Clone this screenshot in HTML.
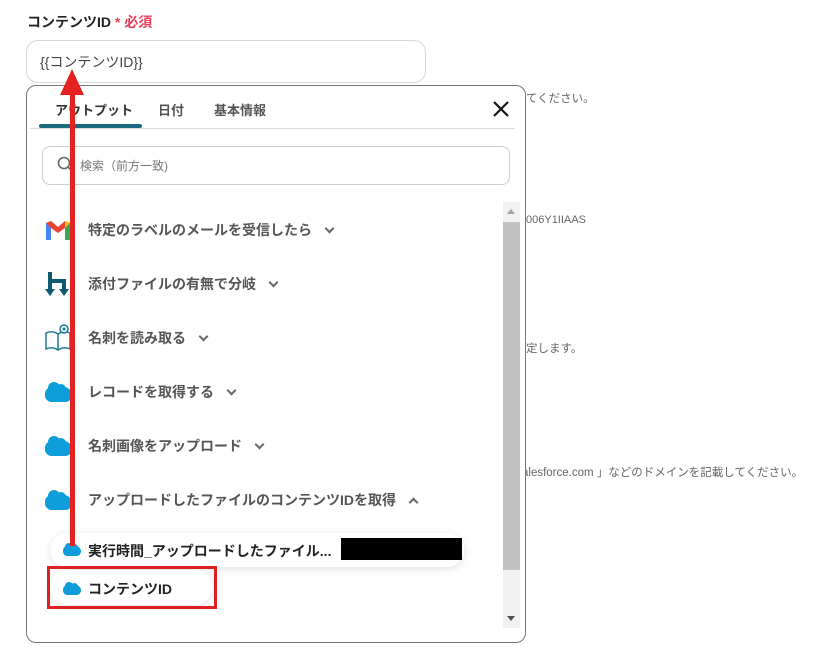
<!DOCTYPE html>
<html><head><meta charset="utf-8"><style>
*{box-sizing:border-box;margin:0;padding:0}
body{width:826px;height:660px;background:#fff;position:relative;overflow:hidden;font-family:"Liberation Sans","Noto Sans CJK JP",sans-serif;color:#333}
.a{position:absolute;white-space:nowrap}
.bg{font-size:11.5px;color:#666}
.item{position:absolute;left:44px;font-size:14px;font-weight:bold;color:#555;display:flex;align-items:center}
.item .ic{width:28px;height:28px;margin-right:16px;display:flex;align-items:center;justify-content:center}
.chev{display:inline-block;width:7px;height:7px;border-right:2px solid #666;border-bottom:2px solid #666;transform:rotate(45deg);margin-left:14px;margin-top:-4px}
.chev.up{transform:rotate(-135deg);margin-top:4px}
.cloud{display:inline-block;width:27px;height:15px;background:#0d9dda;border-radius:8px 10px 8px 8px;position:relative;margin-top:4px}
.cloud:before{content:"";position:absolute;left:3px;top:-5px;width:12px;height:12px;background:#0d9dda;border-radius:50%}
.cloud:after{content:"";position:absolute;left:11px;top:-3px;width:10px;height:10px;background:#0d9dda;border-radius:50%}
.cloud.s{width:18px;height:10px;margin-top:2px}
.cloud.s:before{width:8px;height:8px;top:-3px;left:2px}
.cloud.s:after{width:7px;height:7px;top:-2px;left:8px}
</style></head><body>
<div class="a" style="left:27px;top:12px;font-size:14px;font-weight:bold;color:#222">コンテンツID <span style="color:#e8405a">* 必須</span></div>
<div class="a" style="left:26px;top:40px;width:400px;height:43px;border:1px solid #d5d7dc;border-radius:12px"></div>
<div class="a" style="left:40px;top:52px;font-size:14px;color:#444">{{コンテンツID}}</div>
<div class="a bg" style="left:526px;top:90px">てください。</div>
<div class="a bg" style="left:526px;top:214px;font-size:11px">006Y1IIAAS</div>
<div class="a bg" style="left:526px;top:340px">定します。</div>
<div class="a bg" style="left:522px;top:464px">alesforce.com 」などのドメインを記載してください。</div>

<div class="a" style="left:26px;top:85px;width:500px;height:558px;border:1px solid #777;border-radius:10px;background:#fff"></div>
<div class="a" style="left:55px;top:100px;font-size:13px;font-weight:bold;color:#333">アウトプット</div>
<div class="a" style="left:158px;top:100px;font-size:13px;font-weight:bold;color:#555">日付</div>
<div class="a" style="left:214px;top:100px;font-size:13px;font-weight:bold;color:#555">基本情報</div>
<div class="a" style="left:30px;top:128px;width:485px;height:1px;background:#ddd"></div>
<div class="a" style="left:39px;top:124px;width:103px;height:4px;background:#1b6a80;border-radius:2px"></div>
<svg class="a" style="left:492px;top:100px" width="18" height="18"><path d="M2 2L16 16M16 2L2 16" stroke="#111" stroke-width="2.2"/></svg>
<div class="a" style="left:42px;top:146px;width:468px;height:39px;border:1px solid #ccc;border-radius:8px"></div>
<svg class="a" style="left:57px;top:156px" width="18" height="18"><circle cx="7" cy="7" r="5.5" stroke="#666" stroke-width="1.6" fill="none"/><path d="M11 11L15 15" stroke="#666" stroke-width="1.6"/></svg>
<div class="a" style="left:80px;top:157px;font-size:12px;color:#777">検索（前方一致)</div>

<div class="a" style="left:503px;top:202px;width:17px;height:426px;background:#f1f1f1"></div>
<div class="a" style="left:503px;top:222px;width:17px;height:348px;background:#c1c1c1"></div>
<svg class="a" style="left:506px;top:208px" width="10" height="8"><path d="M1 6L5 1L9 6Z" fill="#a3a3a3"/></svg>
<svg class="a" style="left:506px;top:614px" width="10" height="8"><path d="M1 2L5 7L9 2Z" fill="#505050"/></svg>

<div class="item" style="top:216px"><div class="ic"><svg width="28" height="22" viewBox="0 0 28 22"><path d="M2 4V21H7V9L14 14L21 9V21H26V4L21 2L14 8L7 2Z" fill="#ea4335"/><path d="M2 4V21H7V9Z" fill="#4285f4"/><path d="M21 9V21H26V4Z" fill="#34a853"/><path d="M26 4L21 2V9Z" fill="#fbbc04"/></svg></div>特定のラベルのメールを受信したら<span class="chev"></span></div>
<div class="item" style="top:270px"><div class="ic"><svg width="28" height="28" viewBox="0 0 28 28"><path d="M6 2V20M6 11H20V20" stroke="#0f5a70" stroke-width="4" fill="none"/><path d="M1 19H11L6 26ZM15 19H25L20 26Z" fill="#0f5a70"/></svg></div>添付ファイルの有無で分岐<span class="chev"></span></div>
<div class="item" style="top:324px"><div class="ic"><svg width="28" height="28" viewBox="0 0 28 28"><path d="M2 9V25Q8 22 14 26Q20 22 26 25V9Q20 6 14 10Q8 6 2 9ZM14 10V26" stroke="#1b7a95" stroke-width="1.5" fill="none"/><circle cx="20" cy="5" r="4" stroke="#1b7a95" stroke-width="1.5" fill="#fff"/><circle cx="20" cy="5" r="1.5" fill="#1b7a95"/></svg></div>名刺を読み取る<span class="chev"></span></div>
<div class="item" style="top:378px"><div class="ic"><span class="cloud"></span></div>レコードを取得する<span class="chev"></span></div>
<div class="item" style="top:432px"><div class="ic"><span class="cloud"></span></div>名刺画像をアップロード<span class="chev"></span></div>
<div class="item" style="top:486px"><div class="ic"><span class="cloud"></span></div>アップロードしたファイルのコンテンツIDを取得<span class="chev up"></span></div>

<div class="a" style="left:50px;top:533px;width:414px;height:34px;border-radius:17px;background:#fff;box-shadow:0 2px 8px rgba(0,0,0,.12)"></div>
<div class="a" style="left:63px;top:543px"><span class="cloud s"></span></div>
<div class="a" style="left:88px;top:541px;font-size:14px;font-weight:bold;color:#222">実行時間_アップロードしたファイル...</div>
<div class="a" style="left:341px;top:538px;width:121px;height:22px;background:#000"></div>
<div class="a" style="left:50px;top:570px;width:162px;height:35px;border-radius:17px;background:#fff;box-shadow:0 2px 8px rgba(0,0,0,.1)"></div>
<div class="a" style="left:63px;top:582px"><span class="cloud s"></span></div>
<div class="a" style="left:88px;top:579px;font-size:14px;font-weight:bold;color:#222">コンテンツID</div>
<div class="a" style="left:47px;top:566px;width:170px;height:43px;border:3px solid #e02020"></div>

<div class="a" style="left:70px;top:92px;width:5px;height:454px;background:#e52222"></div>
<svg class="a" style="left:58px;top:68px" width="28" height="28"><path d="M14 1L26 27H2Z" fill="#e52222"/></svg>
</body></html>
